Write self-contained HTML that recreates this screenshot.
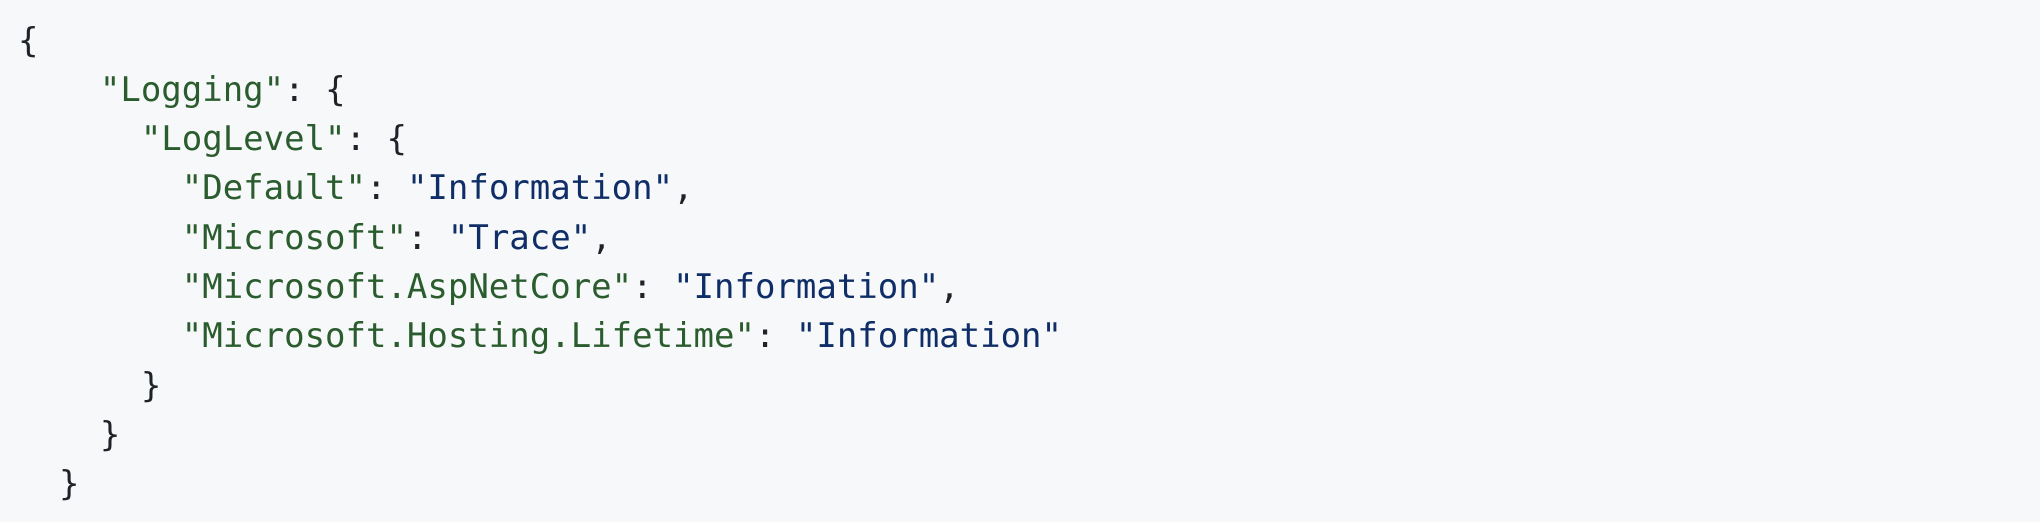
<!DOCTYPE html>
<html><head><meta charset="utf-8"><style>
html,body{margin:0;padding:0;background:#f6f8fa;width:2040px;height:522px;overflow:hidden}
pre{margin:0;position:absolute;left:18px;top:16.5px;font-family:"DejaVu Sans Mono","Liberation Mono",monospace;font-size:34px;line-height:49.3px;color:#1f2328}
.k{color:#2a5c2e}.s{color:#0f2d66}
</style></head><body>
<pre>{
    <span class="k">"Logging"</span>: {
      <span class="k">"LogLevel"</span>: {
        <span class="k">"Default"</span>: <span class="s">"Information"</span>,
        <span class="k">"Microsoft"</span>: <span class="s">"Trace"</span>,
        <span class="k">"Microsoft.AspNetCore"</span>: <span class="s">"Information"</span>,
        <span class="k">"Microsoft.Hosting.Lifetime"</span>: <span class="s">"Information"</span>
      }
    }
  }</pre>
</body></html>
